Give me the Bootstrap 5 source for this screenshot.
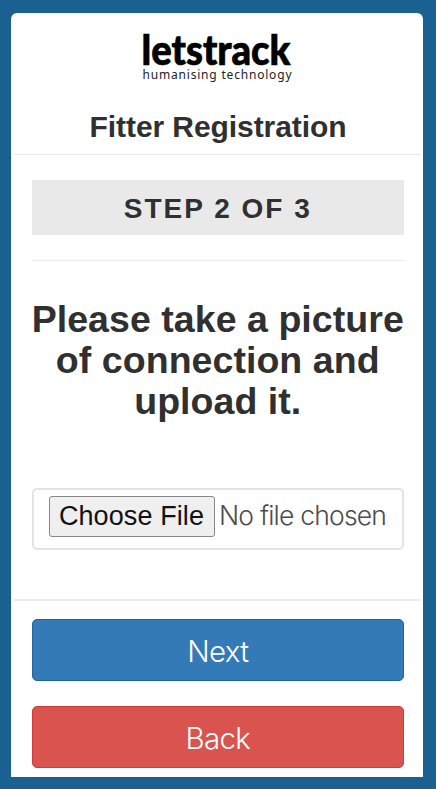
<!DOCTYPE html>
<html lang="en">
<head>
<meta charset="utf-8">
<meta name="viewport" content="width=device-width, initial-scale=1">
<title>Fitter Registration</title>
<link href="https://cdn.jsdelivr.net/npm/bootstrap@5.3.0/dist/css/bootstrap.min.css" rel="stylesheet">
<style>
body{background:#1a6192;font-family:"Liberation Sans",Arial,sans-serif;color:#303030;height:789px;padding:13px 13px 12px 11px;overflow:hidden}
.panel{height:764px;border-radius:6px 6px 0 0}
.panel-head{height:142px;margin:0 3px;border-bottom:1px solid #e6e6e6;padding-top:10px}
.logo{overflow:visible}
.title{font-size:30px;line-height:36px;letter-spacing:-.08px;margin-top:23px;padding-left:2px}
.panel-main{height:446px;padding:25px 16.5px 0 18px;margin:0 3px;border-bottom:2px solid #ebebeb}
.step{height:55px;background:#e9e9e9;font-size:28px;line-height:57px;letter-spacing:2px}
.rule{height:1px;background:#ececec;margin-top:25px}
.prompt{font-size:37.5px;line-height:41px;letter-spacing:.05px;margin:38px -8px 0}
.file-box{height:62px;border:2px solid #e3e3e3;border-radius:5px;margin-top:66px;padding:6px 0 0 14.5px;font-size:27px;cursor:pointer}
.file-btn{width:166px;height:41px;border:1.5px solid #868686;border-radius:3px;background:#efefef;color:#111;line-height:38px;letter-spacing:.1px}
.file-name{font-family:Inter,"Liberation Sans",sans-serif;font-weight:300;color:#4c4c4c;font-size:26.5px;letter-spacing:-.8px;line-height:39px;margin-left:4.5px}
.actions{padding:18px 19.5px 0 21px;gap:25px}
.action{height:62px;border-radius:5px;font-family:Inter,"Liberation Sans",sans-serif;font-weight:300;font-size:29.5px;letter-spacing:-.7px;line-height:62px;padding:0}
.action-next{--bs-btn-color:#fff;--bs-btn-bg:#337ab7;--bs-btn-border-color:#20639f}
.action-back{--bs-btn-color:#fff;--bs-btn-bg:#d9534f;--bs-btn-border-color:#d13b37}
</style>
</head>
<body>
<main class="panel bg-white d-flex flex-column">
  <header class="panel-head text-center">
    <svg class="logo d-block mx-auto" width="160" height="63" viewBox="0 0 160 63" role="img" aria-label="letstrack humanising technology">
      <text x="4.5" y="41.5" font-family="Lato, sans-serif" font-weight="900" font-size="42" textLength="149" lengthAdjust="spacingAndGlyphs" stroke="#000" stroke-width=".7">letstrack</text>
      <text x="5.5" y="56" font-family="Noto Sans, sans-serif" font-size="12" textLength="149" fill="#222">humanising technology</text>
    </svg>
    <h1 class="title fw-bold mb-0">Fitter Registration</h1>
  </header>
  <section class="panel-main">
    <div class="step text-center fw-bold">STEP 2 OF 3</div>
    <div class="rule"></div>
    <h2 class="prompt text-center fw-bold mb-0">Please take a picture<br>of connection and<br>upload it.</h2>
    <label class="file-box d-flex text-nowrap">
      <input type="file" class="visually-hidden">
      <span class="file-btn text-center">Choose File</span>
      <span class="file-name">No file chosen</span>
    </label>
  </section>
  <div class="actions d-grid">
    <button type="button" class="btn action action-next">Next</button>
    <button type="button" class="btn action action-back">Back</button>
  </div>
</main>
<script src="https://cdn.jsdelivr.net/npm/bootstrap@5.3.0/dist/js/bootstrap.bundle.min.js"></script>
</body>
</html>
